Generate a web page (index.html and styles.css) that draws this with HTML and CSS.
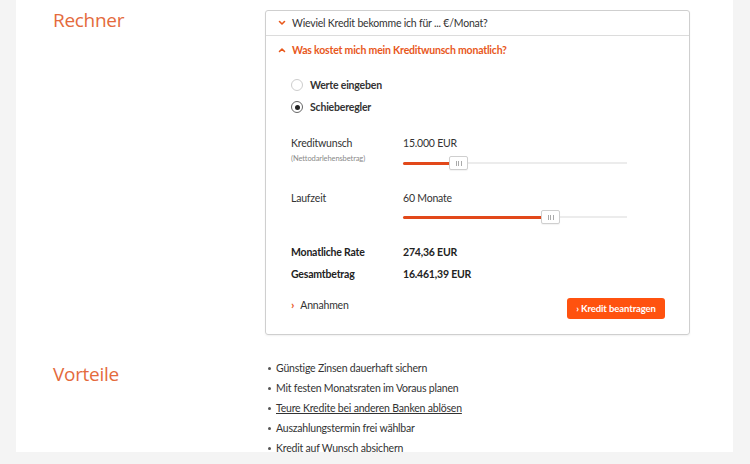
FILE: index.html
```html
<!DOCTYPE html>
<html lang="de">
<head>
<meta charset="utf-8">
<title>Rechner</title>
<link rel="stylesheet" href="styles.css">
</head>
<body>
<main class="page">
  <section class="section section-calc">
    <h2 class="section-title">Rechner</h2>
    <div class="card">
      <div class="acc-head acc-closed">
        <svg class="chev" width="8" height="6" viewBox="0 0 8 6"><polyline points="1.5,1.5 4,4 6.5,1.5" fill="none" stroke="#e8581c" stroke-width="1.6" stroke-linecap="round" stroke-linejoin="round"/></svg>
        <span>Wieviel Kredit bekomme ich für ... €/Monat?</span>
      </div>
      <div class="acc-head acc-open">
        <svg class="chev" width="8" height="6" viewBox="0 0 8 6"><polyline points="1.5,4.5 4,2 6.5,4.5" fill="none" stroke="#e8581c" stroke-width="1.6" stroke-linecap="round" stroke-linejoin="round"/></svg>
        <span>Was kostet mich mein Kreditwunsch monatlich?</span>
      </div>
      <div class="acc-body">
        <div class="radios">
          <label class="radio"><span class="radio-dot"></span>Werte eingeben</label>
          <label class="radio"><span class="radio-dot radio-on"></span>Schieberegler</label>
        </div>

        <div class="slider-block">
          <div class="lbl">Kreditwunsch</div>
          <div class="val">15.000 EUR</div>
          <div class="sublbl">(Nettodarlehensbetrag)</div>
          <div class="slider">
            <div class="track"></div>
            <div class="fill" style="width: 48px"></div>
            <div class="thumb" style="left: 46px"><i></i><i></i><i></i></div>
          </div>
        </div>

        <div class="slider-block block-2">
          <div class="lbl">Laufzeit</div>
          <div class="val">60 Monate</div>
          <div class="sublbl"></div>
          <div class="slider">
            <div class="track"></div>
            <div class="fill" style="width: 140px"></div>
            <div class="thumb" style="left: 138px"><i></i><i></i><i></i></div>
          </div>
        </div>

        <div class="results">
          <div class="res-lbl">Monatliche Rate</div>
          <div class="res-val">274,36 EUR</div>
          <div class="res-lbl">Gesamtbetrag</div>
          <div class="res-val">16.461,39 EUR</div>
        </div>

        <div class="card-foot">
          <a class="more"><span class="more-chev">›</span>Annahmen</a>
          <button class="btn">› Kredit beantragen</button>
        </div>
      </div>
    </div>
  </section>

  <section class="section section-adv">
    <h2 class="section-title title-adv">Vorteile</h2>
    <ul class="adv-list">
      <li>Günstige Zinsen dauerhaft sichern</li>
      <li>Mit festen Monatsraten im Voraus planen</li>
      <li><a class="link">Teure Kredite bei anderen Banken ablösen</a></li>
      <li>Auszahlungstermin frei wählbar</li>
      <li>Kredit auf Wunsch absichern</li>
    </ul>
  </section>
</main>
</body>
</html>
```

FILE: styles.css
```css
* { box-sizing: border-box; }

html, body {
  margin: 0;
  padding: 0;
}

body {
  background: #f4f4f4;
  font-family: "Lato", "Open Sans", sans-serif;
  color: #333333;
  font-size: 10.5px;
  letter-spacing: -0.2px;
  height: 464px;
  overflow: hidden;
}

.page {
  margin: 0 17px 0 16px;
  background: #ffffff;
  height: 452px;
  padding-top: 10px;
}

.section {
  display: grid;
  grid-template-columns: 249px 425px;
}

.section-title {
  margin: 0;
  padding-left: 37px;
  font-family: "Open Sans", sans-serif;
  font-weight: 400;
  font-size: 19px;
  line-height: 20px;
  color: #e46a3c;
  letter-spacing: -0.3px;
}

/* Card */
.card {
  border: 1px solid #cfcfcf;
  border-radius: 3px;
  height: 325px;
  box-shadow: 0 1px 2px rgba(0,0,0,0.06);
}

.acc-head {
  display: flex;
  align-items: center;
  gap: 6px;
  padding-left: 12px;
}

.acc-closed {
  height: 25px;
  border-bottom: 1px solid #dcdcdc;
  color: #333;
}

.acc-open {
  height: 28px;
  color: #e8581c;
  font-weight: 700;
}

.chev { flex: none; }

.acc-body {
  padding: 10px 24px 0 25px;
}

.radios {
  display: flex;
  flex-direction: column;
}

.radio {
  display: flex;
  align-items: center;
  height: 22px;
  font-weight: 700;
  color: #333;
}

.radio-dot {
  width: 12px;
  height: 12px;
  border-radius: 50%;
  border: 1px solid #cdcdcd;
  background: #fff;
  margin-right: 7px;
  position: relative;
}

.radio-on {
  border-color: #666;
}

.radio-on::after {
  content: "";
  position: absolute;
  left: 2.5px;
  top: 2.5px;
  width: 5px;
  height: 5px;
  border-radius: 50%;
  background: #222;
}

/* sliders */
.slider-block {
  display: grid;
  grid-template-columns: 112px 224px;
  grid-template-rows: 16px 16px;
  row-gap: 4px;
  margin-top: 17px;
}

.block-2 {
  margin-top: 19px;
  row-gap: 3px;
}

.lbl, .val {
  line-height: 16px;
  color: #333;
}

.sublbl {
  font-size: 7.5px;
  letter-spacing: -0.1px;
  line-height: 8px;
  color: #8a8a8a;
}

.slider {
  position: relative;
  height: 16px;
}

.track {
  position: absolute;
  left: 0;
  right: 0;
  top: 7px;
  height: 2px;
  background: #ececec;
}

.fill {
  position: absolute;
  left: 0;
  top: 6.5px;
  height: 3px;
  background: #e2481a;
  border-radius: 2px;
}

.thumb {
  position: absolute;
  top: 1px;
  width: 19px;
  height: 14px;
  background: #fff;
  border: 1px solid #cfcfcf;
  border-radius: 2px;
  display: flex;
  align-items: center;
  justify-content: center;
  gap: 1.5px;
  box-shadow: 0 1px 1px rgba(0,0,0,0.05);
}

.thumb i {
  display: block;
  width: 1px;
  height: 5px;
  background: #aaa;
}

/* results */
.results {
  display: grid;
  grid-template-columns: 112px 224px;
  grid-auto-rows: 16px;
  row-gap: 6px;
  margin-top: 19px;
  font-weight: 700;
  line-height: 16px;
  color: #222;
}

.card-foot {
  display: flex;
  justify-content: space-between;
  align-items: flex-start;
  margin-top: 15px;
}

.more {
  line-height: 16px;
  color: #333;
  display: flex;
  align-items: center;
}

.more-chev {
  color: #e8581c;
  font-weight: 700;
  font-size: 12px;
  margin-right: 6px;
}

.btn {
  margin-top: 1px;
  height: 21px;
  width: 98px;
  padding: 0;
  border: none;
  border-radius: 3px;
  background: #ff520f;
  color: #fff;
  font-family: "Lato", "Open Sans", sans-serif;
  font-weight: 700;
  font-size: 9.5px;
  letter-spacing: -0.1px;
}

/* Vorteile */
.section-adv {
  margin-top: 23px;
}

.title-adv {
  margin-top: 6px;
}

.adv-list {
  margin: 0;
  padding: 0 0 0 3px;
  list-style: none;
}

.adv-list li {
  line-height: 20px;
  color: #333;
  display: flex;
  align-items: center;
}

.adv-list li::before {
  content: "";
  width: 3px;
  height: 3px;
  border-radius: 50%;
  background: #555;
  margin-right: 5px;
  flex: none;
}

.link {
  text-decoration: underline;
  color: #333;
}
```
